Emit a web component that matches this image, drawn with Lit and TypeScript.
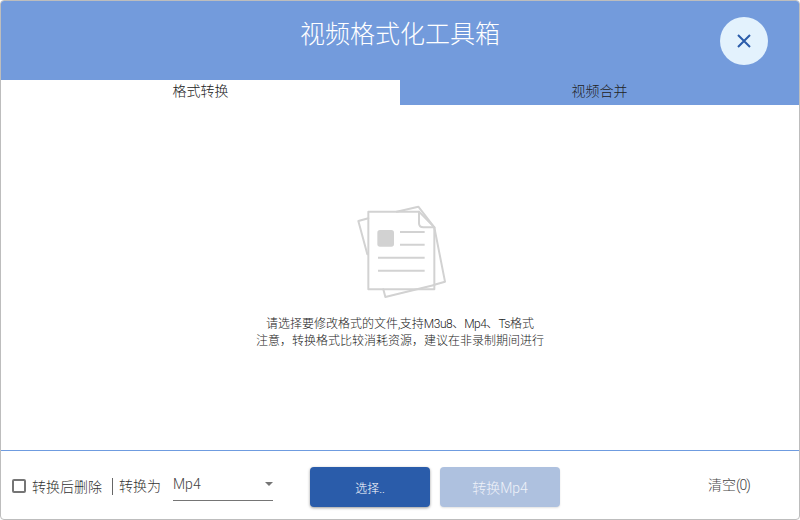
import { LitElement, html, css } from "lit";
import { customElement } from "lit/decorators.js";

@customElement("app-root")
export class AppRoot extends LitElement {
  static styles = css`
    :host { display: block; width: 800px; height: 520px; font-family: Roboto, "Noto Sans CJK SC", sans-serif; color: #333; }
    .win { box-sizing: border-box; width: 800px; height: 520px; border: 1px solid #bdbdbd; border-radius: 4px; background: #fff; display: flex; flex-direction: column; overflow: hidden; }
    .head { flex: none; height: 79px; background: #739bdc; position: relative; display: flex; justify-content: center; }
    .title { color: #fff; font-size: 25px; line-height: 28px; margin-top: 20px; font-weight: 300; }
    .close { position: absolute; left: 719px; top: 16px; width: 48px; height: 48px; border-radius: 50%; background: #e3f2fd; display: flex; align-items: center; justify-content: center; }
    .tabs { flex: none; height: 25px; display: flex; }
    .tab { flex: 1; display: flex; justify-content: center; font-size: 14px; line-height: 22px; font-weight: 300; color: #222; background: #739bdc; }
    .tab.on { background: #fff; }
    .body { flex: 1; display: flex; flex-direction: column; align-items: center; padding-top: 90px; }
    .doc { display: block; }
    .hint { margin-top: 11px; text-align: center; font-size: 12px; line-height: 17px; font-weight: 300; color: #222; }
    .lat { letter-spacing: -0.5px; }
    .foot { flex: none; height: 69px; border-top: 1px solid #6f9ce0; display: flex; align-items: flex-start; box-sizing: border-box; padding-left: 11px; }
    .check { display: flex; align-items: center; gap: 6px; margin-top: 25px; height: 20px; font-size: 14px; font-weight: 300; color: #333; }
    .box { width: 10px; height: 10px; border: 2px solid #757575; border-radius: 2px; }
    .sep { margin-left: 10px; margin-top: 27px; height: 17px; width: 1px; background: #666; }
    .lab { margin-left: 6px; margin-top: 25px; line-height: 20px; font-size: 14px; font-weight: 300; color: #333; }
    .sel { margin-left: 12px; margin-top: 21px; width: 100px; height: 29px; border-bottom: 1px solid #757575; display: flex; justify-content: space-between; align-items: center; box-sizing: border-box; font-size: 14px; font-weight: 300; color: #444; padding-bottom: 5px; }
    .arrow { width: 0; height: 0; border-left: 4px solid transparent; border-right: 4px solid transparent; border-top: 4px solid #757575; }
    .btn { margin-top: 16px; height: 40px; width: 120px; border-radius: 4px; display: flex; align-items: center; justify-content: center; font-size: 14px; font-weight: 300; color: #fff; }
    .b1 { margin-left: 37px; background: #2a5caa; font-size: 12px; box-shadow: 0 1px 3px rgba(0,0,0,.4); box-sizing: border-box; padding-top: 1px; }
    .b2 { margin-left: 10px; background: #aec1df; color: #eef2f9; box-shadow: 0 1px 2px rgba(0,0,0,.12); }
    .clear { margin-left: 148px; margin-top: 24px; line-height: 20px; font-size: 14px; font-weight: 300; color: #444; }
    .clear span { letter-spacing: -1px; }
  `;

  render() {
    return html`
      <div class="win">
        <div class="head">
          <div class="title">视频格式化工具箱</div>
          <div class="close">
            <svg width="14" height="14" viewBox="0 0 14 14"><path d="M1 1L13 13M13 1L1 13" stroke="#2a5caa" stroke-width="2" fill="none"/></svg>
          </div>
        </div>
        <div class="tabs">
          <div class="tab on">格式转换</div>
          <div class="tab">视频合并</div>
        </div>
        <div class="body">
          <svg class="doc" width="120" height="110" viewBox="0 0 360 330" fill="none" stroke="#d2d2d2" stroke-width="6" stroke-linejoin="round" stroke-linecap="round">
            <path d="M85 70L55 78L82 178"/>
            <path d="M170 50L235 35L283 97L315 260L283 269"/>
            <path d="M130 283L136 306L283 270"/>
            <path d="M85 50H237L283 97V283H85Z"/>
            <path d="M237 50V85Q237 97 250 97H283"/>
            <rect x="112" y="105" width="50" height="50" rx="8" fill="#d2d2d2" stroke="none"/>
            <path d="M180 111H254M180 149H254M114 188H254M114 227H254" stroke-linecap="butt"/>
          </svg>
          <div class="hint">请选择要修改格式的文件<span class="lat">,</span>支持<span class="lat">M3u8</span>、<span class="lat">Mp4</span>、<span class="lat">Ts</span>格式<br />注意，转换格式比较消耗资源，建议在非录制期间进行</div>
        </div>
        <div class="foot">
          <div class="check"><span class="box"></span>转换后删除</div>
          <div class="sep"></div>
          <div class="lab">转换为</div>
          <div class="sel"><span>Mp4</span><span class="arrow"></span></div>
          <div class="btn b1">选择..</div>
          <div class="btn b2">转换Mp4</div>
          <div class="clear">清空<span>(0)</span></div>
        </div>
      </div>
    `;
  }
}
